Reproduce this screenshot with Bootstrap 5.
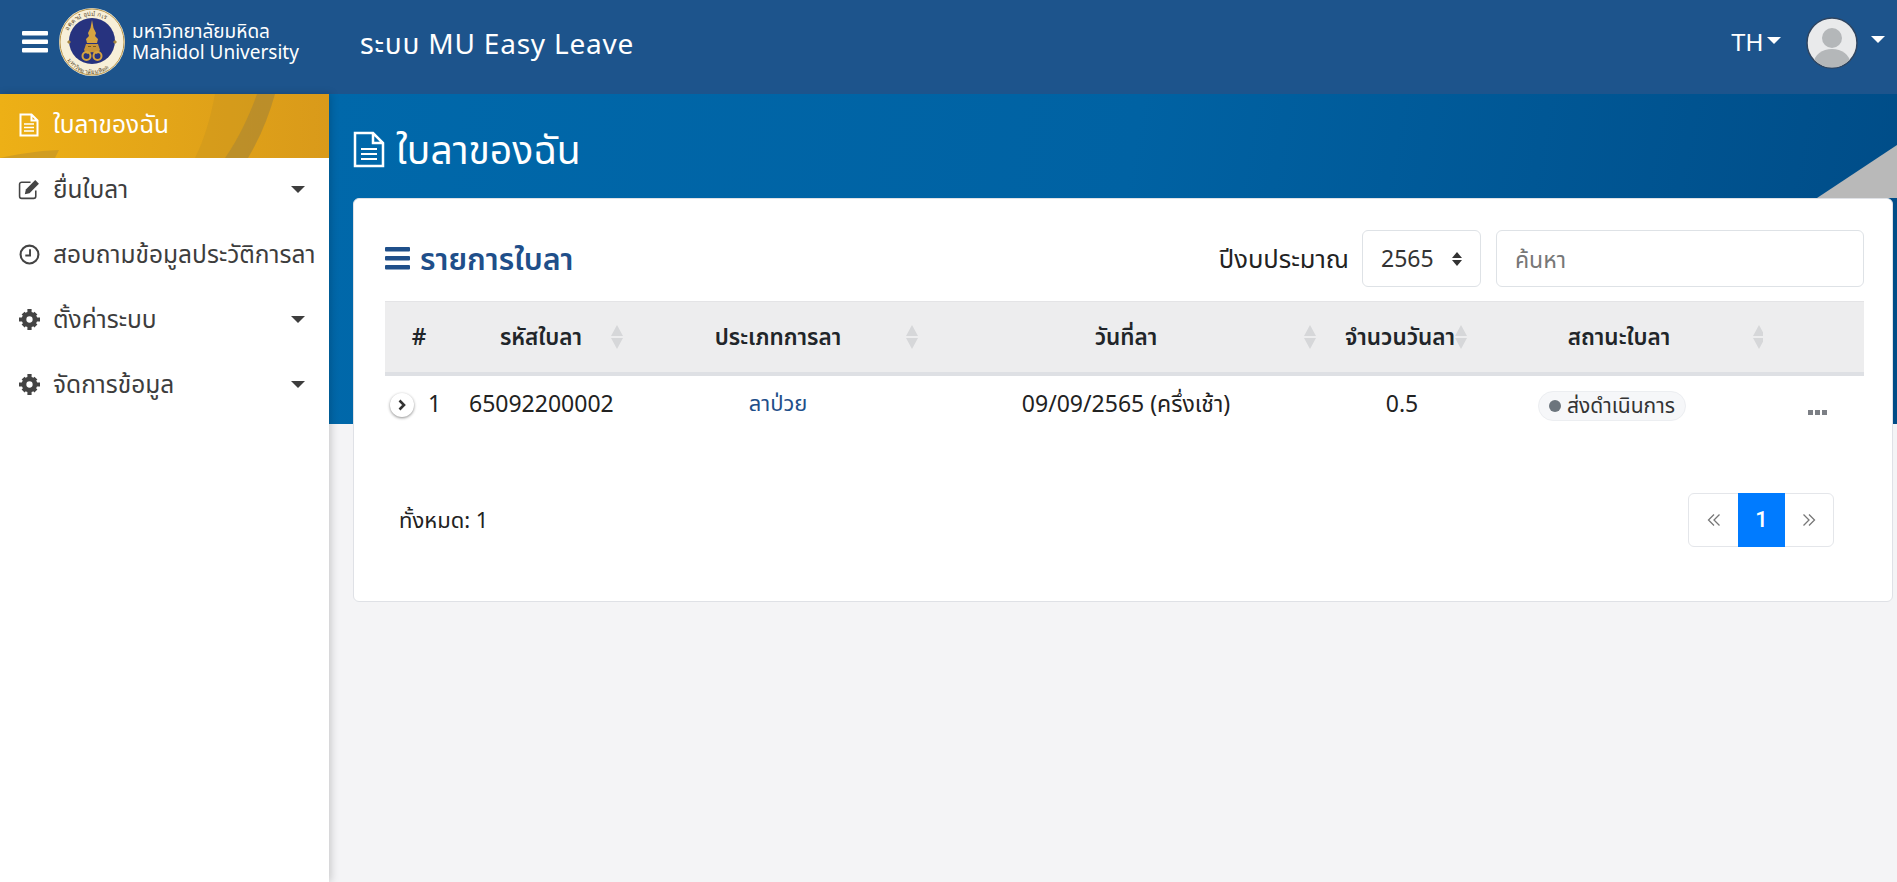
<!DOCTYPE html>
<html lang="th">
<head>
    <meta charset="UTF-8">
    <title>MU Easy Leave</title>
    <link href="https://cdn.jsdelivr.net/npm/bootstrap@5.3.0/dist/css/bootstrap.min.css" rel="stylesheet">
    <style>
        html, body { height: 100%; }
        body {
            font-family: "Noto Sans", "Noto Sans Thai", "Open Sans", sans-serif;
            background-color: #f4f4f6;
            color: #222;
            font-size: 22px;
            overflow: hidden;
        }
        .top-bar {
            height: 94px;
            background-color: #1d548c;
            color: #fff;
            padding: 0 0 10px 22px;
        }
        .logo-text { font-size: 19px; line-height: 21px; margin-left: 6px; width: 172px; white-space: nowrap; }
        .sys-title { font-size: 28px; margin-left: 56px; letter-spacing: .8px; white-space: nowrap; padding-top: 1px; }
        .caret-down {
            display: inline-block;
            border-top: 7px solid currentColor;
            border-left: 7px solid transparent;
            border-right: 7px solid transparent;
        }
        .user-area { margin-top: 2px; }
        .lang-btn { font-family: "Liberation Sans", sans-serif; font-size: 24px; margin-right: 25px; }
        .avatar { width: 52px; height: 52px; margin-right: 13px; }
        .user-caret { margin-right: 12px; margin-top: -8px; }
        .page-body { height: 788px; }
        .side-menu {
            width: 329px;
            flex-shrink: 0;
            background: #fff;
            box-shadow: 2px 0 8px rgba(0, 0, 0, .18);
            z-index: 2;
        }
        .side-item {
            height: 65px;
            border: 0;
            border-radius: 0 !important;
            color: #3d3d3d;
            font-size: 24.500px;
            white-space: nowrap;
            padding: 0 20px 3px 19px;
        }
        .side-item.is-active {
            position: relative;
            overflow: hidden;
            height: 64px;
            color: #fff;
            background: linear-gradient(90deg, #edb016, #d99a1a);
        }
        .side-item.is-active > span, .side-item.is-active > .side-ico { position: relative; }
        .streaks { position: absolute; left: 0; top: 0; }
        .side-ico { width: 21px; height: 21px; margin-right: 13px; flex-shrink: 0; }
        .side-ico.ico-file { width: 20px; height: 24px; margin-right: 14px; }
        .side-ico.ico-edit { width: 23px; margin-left: -1px; margin-right: 12px; }
        .main-area { min-width: 0; }
        .hero {
            position: relative;
            height: 330px;
            margin-bottom: -226px;
            background: linear-gradient(100deg, #0068aa 0%, #0062a3 50%, #004c87 100%);
            color: #fff;
            padding: 32px 0 0 24px;
            overflow: hidden;
        }
        .hero-title { font-size: 39px; font-weight: 400; margin: 0; }
        .hero-corner { position: absolute; right: 0; top: 51px; }
        .list-panel {
            position: relative;
            margin: 0 4px 0 24px;
            height: 404px;
            border-radius: 6px;
            border: 1px solid #dfe1e6;
            padding: 31px 28px 0 31px;
        }
        .panel-title { font-size: 30.500px; font-weight: 600; color: #1f4f8a; margin: 0; }
        .budget-label { font-size: 25.500px; margin-right: 13px; }
        .year-select {
            width: 119px;
            height: 57px;
            font-size: 23px;
            color: #333;
            margin-right: 15px;
            padding: 0 30px 0 18px;
            background-image: url("data:image/svg+xml,%3Csvg xmlns='http://www.w3.org/2000/svg' viewBox='0 0 12 16'%3E%3Cpath fill='%23333' d='M6 1l5 6H1zM6 15l5-6H1z'/%3E%3C/svg%3E");
            background-size: 12px 16px;
            background-position: right 17px center;
        }
        .search-box { width: 368px; height: 57px; font-size: 23px; padding-left: 18px; }
        .search-box::placeholder { color: #777; }
        .leave-table { table-layout: fixed; margin: 14px 0 0; width: 100%; }
        .leave-table th {
            background: #ededee;
            height: 72px;
            border-top: 1px solid #e4e4e6;
            border-bottom: 4px solid #dee0e4;
            font-size: 22.500px;
            font-weight: 600;
            vertical-align: middle;
            padding: 0;
            position: relative;
            white-space: nowrap;
        }
        .leave-table td {
            border: 0;
            font-size: 23px;
            padding: 10px 0 0;
            vertical-align: top;
            color: #222;
        }
        .sort-mark { position: absolute; top: 50%; transform: translateY(-50%); width: 12px; height: 24px; }
        .row-toggle {
            display: inline-flex;
            align-items: center;
            justify-content: center;
            width: 24px;
            height: 24px;
            border-radius: 50%;
            background: #fff;
            box-shadow: 0 1px 3px rgba(0, 0, 0, .45);
            margin: 7px 14px 0 5px;
            vertical-align: top;
        }
        .leave-table td.leave-type { color: #1f4f8a; font-size: 22px; }
        .status-pill {
            display: inline-flex;
            align-items: center;
            background: #f6f7f9;
            border: 1px solid #eceef1;
            border-radius: 15px;
            color: #333;
            font-size: 21px;
            font-weight: 400;
            height: 30px;
            padding: 0 10px;
            margin-top: 4px;
            white-space: nowrap;
        }
        .status-dot { width: 12px; height: 12px; border-radius: 50%; background: #6c757d; margin-right: 6px; }
        .more-dots { display: flex; gap: 2px; margin: 24px 0 0 45px; }
        .more-dots i { width: 5px; height: 5px; background: #7c7f85; display: block; }
        .panel-foot { margin: 72px 30px 0 14px; }
        .page-link { height: 54px; display: flex; align-items: center; justify-content: center; width: 50px; padding: 0; font-size: 24px; color: #777; border-color: #e4e6ea; }
        .page-item:first-child .page-link { width: 51px; }
        .page-item.active .page-link { background: #007bff; border-color: #007bff; width: 47px; color: #fff; font-family: Roboto, sans-serif; font-weight: 500; font-size: 22px; }
    </style>
</head>
<body>

<!-- Top bar -->
<nav class="navbar top-bar d-flex align-items-center flex-nowrap">
    <div class="d-flex align-items-center">
        <svg width="26" height="22" viewBox="0 0 26 22" fill="#fff" class="me-1"><rect y="0" width="26" height="4.5" rx="1"/><rect y="8.5" width="26" height="4.5" rx="1"/><rect y="17" width="26" height="4.5" rx="1"/></svg>
        <svg width="68" height="68" viewBox="0 0 68 68" style="margin-left:6px">
            <defs><path id="ringTop" d="M8 34a26 26 0 0 1 52 0"/><path id="ringBot" d="M6 38a28 28 0 0 0 56 0"/></defs>
            <ellipse cx="34" cy="34" rx="33" ry="34" fill="#f7efd8"/>
            <ellipse cx="34" cy="34" rx="32" ry="33" fill="none" stroke="#b8954c" stroke-width="1"/>
            <circle cx="34" cy="33" r="23" fill="#27337f"/>
            <text font-size="6" fill="#5b4a2a" font-family="Noto Sans, sans-serif"><textPath href="#ringTop" startOffset="14%">อตฺตานํ อุปมํ กเร</textPath></text>
            <text font-size="6" fill="#5b4a2a" font-family="Noto Sans, sans-serif"><textPath href="#ringBot" startOffset="16%">มหาวิทยาลัยมหิดล</textPath></text>
            <!-- crown and emblem -->
            <path d="M34 12l1.500 8 2.500 5-1 3 3 3-1 4H29l-1-4 3-3-1-3 2.500-5z" fill="#d6a440"/>
            <path d="M28 36h12l2 6-3 4-5-2-5 2-3-4z" fill="#c9963a"/>
            <path d="M30 38.500h3M35 38.500h3" stroke="#7d5a1c" stroke-width="1.200"/>
            <circle cx="28.500" cy="48" r="4" fill="none" stroke="#d6a440" stroke-width="2"/>
            <circle cx="39.500" cy="48" r="4" fill="none" stroke="#d6a440" stroke-width="2"/>
            <path d="M9 34l2-2 2 2-2 2zM55 34l2-2 2 2-2 2z" fill="#a8873f"/>
        </svg>
        <div class="logo-text">มหาวิทยาลัยมหิดล<br>Mahidol University</div>
        <div class="sys-title">ระบบ MU Easy Leave</div>
    </div>
    <div class="ms-auto d-flex align-items-center user-area">
        <div class="lang-btn d-flex align-items-center">TH<span class="caret-down ms-1" style="margin-top:-6px"></span></div>
        <svg class="avatar" viewBox="0 0 52 52">
            <defs><clipPath id="avClip"><circle cx="26" cy="26" r="24.5"/></clipPath></defs>
            <circle cx="26" cy="26" r="25" fill="#e9eaeb" stroke="#2f4560" stroke-width="1.5"/>
            <g clip-path="url(#avClip)" fill="#b4b7b9"><circle cx="26" cy="21" r="10"/><ellipse cx="26" cy="46" rx="18" ry="14"/></g>
        </svg>
        <span class="caret-down user-caret"></span>
    </div>
</nav>

<div class="d-flex page-body">
    <!-- Side menu -->
    <div class="side-menu list-group list-group-flush">
        <a class="list-group-item side-item is-active d-flex align-items-center" href="#">
            <svg class="streaks" width="329" height="64" viewBox="0 0 329 64"><path d="M215 0h42c-8 22-18 44-32 64h-30c10-20 16-42 20-64z" fill="#b98a24" opacity=".25"/><path d="M257 0h18c-6 22-15 44-27 64h-23c14-20 24-42 32-64z" fill="#a98533" opacity=".65"/><path d="M0 64c18-4 36-7 59-8l-4 8z" fill="#a98533" opacity=".4"/></svg>
            <svg class="side-ico ico-file" viewBox="0 0 20 24" fill="none" stroke="#fff" stroke-width="2"><path d="M1.500 1.500h11l6 6v15h-17zM12.500 1.500v6h6"/><path d="M5 11h10M5 14.500h10M5 18h10" stroke-width="1.700"/></svg>
            <span>ใบลาของฉัน</span>
        </a>
        <a class="list-group-item side-item d-flex align-items-center" href="#">
            <svg class="side-ico ico-edit" viewBox="0 0 22 20" fill="none" stroke="#444" stroke-width="1.500"><path d="M17 11v5.500a2 2 0 0 1-2 2H3.500a2 2 0 0 1-2-2V5a2 2 0 0 1 2-2H12"/><path d="M7.500 10l9-9 3.500 3.500-9 9-4.500 1z" fill="#444" stroke="none"/></svg>
            <span>ยื่นใบลา</span><span class="caret-down ms-auto me-1"></span>
        </a>
        <a class="list-group-item side-item d-flex align-items-center" href="#">
            <svg class="side-ico" viewBox="0 0 20 20" fill="none" stroke="#444" stroke-width="2"><circle cx="10" cy="10" r="8.500"/><path d="M10.500 5v6H6" stroke-width="1.800"/></svg>
            <span>สอบถามข้อมูลประวัติการลา</span>
        </a>
        <a class="list-group-item side-item d-flex align-items-center" href="#">
            <svg class="side-ico" viewBox="0 0 20 20"><circle cx="10" cy="10" r="5.200" fill="none" stroke="#444" stroke-width="4.400"/><path d="M8 0h4v4H8zM8 16h4v4H8zM0 8h4v4H0zM16 8h4v4h-4zM2.500 5.300l2.800-2.800 2.500 2.500-2.800 2.800zM12.200 15l2.800-2.800 2.500 2.500-2.800 2.800zM2.500 14.700l2.500-2.500 2.800 2.800-2.500 2.500zM12.200 5l2.500-2.500 2.800 2.800-2.500 2.500z" fill="#444"/></svg>
            <span>ตั้งค่าระบบ</span><span class="caret-down ms-auto me-1"></span>
        </a>
        <a class="list-group-item side-item d-flex align-items-center" href="#">
            <svg class="side-ico" viewBox="0 0 20 20"><circle cx="10" cy="10" r="5.200" fill="none" stroke="#444" stroke-width="4.400"/><path d="M8 0h4v4H8zM8 16h4v4H8zM0 8h4v4H0zM16 8h4v4h-4zM2.500 5.300l2.800-2.800 2.500 2.500-2.800 2.800zM12.200 15l2.800-2.800 2.500 2.500-2.800 2.800zM2.500 14.700l2.500-2.500 2.800 2.800-2.500 2.500zM12.200 5l2.500-2.500 2.800 2.800-2.500 2.500z" fill="#444"/></svg>
            <span>จัดการข้อมูล</span><span class="caret-down ms-auto me-1"></span>
        </a>
    </div>

    <!-- Main -->
    <div class="main-area flex-grow-1">
        <div class="hero">
            <svg class="hero-corner" width="80" height="53" viewBox="0 0 80 53"><path d="M80 0v53H0z" fill="#b9b9b9"/></svg>
            <h1 class="hero-title d-flex align-items-center">
                <svg width="32" height="37" viewBox="0 0 32 37" fill="none" stroke="#fff" stroke-width="2.500" style="margin-right:11px"><path d="M2 2h18l10 10v23H2zM20 2v10h10"/><path d="M8 18h16M8 23h16M8 28h16" stroke-width="2.200"/></svg>
                ใบลาของฉัน
            </h1>
        </div>

        <div class="card list-panel">
            <div class="d-flex align-items-center">
                <h2 class="panel-title d-flex align-items-center">
                    <svg width="25" height="23" viewBox="0 0 25 23" fill="#1f4f8a" style="margin-right:10px"><rect width="25" height="4.500" rx="1"/><rect y="9" width="25" height="4.500" rx="1"/><rect y="18" width="25" height="4.500" rx="1"/></svg>
                    รายการใบลา
                </h2>
                <div class="ms-auto d-flex align-items-center">
                    <span class="budget-label">ปีงบประมาณ</span>
                    <select class="form-select year-select"><option>2565</option></select>
                    <input class="form-control search-box" type="text" placeholder="ค้นหา">
                </div>
            </div>

            <table class="table leave-table text-center">
                <colgroup><col style="width:68px"><col style="width:176px"><col style="width:298px"><col style="width:398px"><col style="width:150px"><col style="width:288px"><col></colgroup>
                <thead>
                    <tr>
                        <th>#</th>
                        <th>รหัสใบลา<svg class="sort-mark" style="right:6px" viewBox="0 0 12 24" fill="#d6d7d9"><path d="M6 0l6 11H0zM6 24l6-11H0z"/></svg></th>
                        <th>ประเภทการลา<svg class="sort-mark" style="right:9px" viewBox="0 0 12 24" fill="#d6d7d9"><path d="M6 0l6 11H0zM6 24l6-11H0z"/></svg></th>
                        <th>วันที่ลา<svg class="sort-mark" style="right:9px" viewBox="0 0 12 24" fill="#d6d7d9"><path d="M6 0l6 11H0zM6 24l6-11H0z"/></svg></th>
                        <th>จำนวนวันลา<svg class="sort-mark" style="right:8px" viewBox="0 0 12 24" fill="#d6d7d9"><path d="M6 0l6 11H0zM6 24l6-11H0z"/></svg></th>
                        <th>สถานะใบลา<svg class="sort-mark" style="right:-2px" viewBox="0 0 12 24" fill="#d6d7d9"><path d="M6 0l6 11H0zM6 24l6-11H0z"/></svg></th>
                        <th></th>
                    </tr>
                </thead>
                <tbody>
                    <tr>
                        <td class="text-start"><span class="row-toggle"><svg width="10" height="12" viewBox="0 0 10 12" fill="none" stroke="#333" stroke-width="2.600"><path d="M2.500 1.500L7 6l-4.500 4.500"/></svg></span>1</td>
                        <td class="text-start" style="padding-left:16px">65092200002</td>
                        <td class="leave-type">ลาป่วย</td>
                        <td>09/09/2565 (ครึ่งเช้า)</td>
                        <td style="padding-left:4px">0.5</td>
                        <td class="text-start" style="padding-left:63px"><span class="status-pill"><span class="status-dot"></span>ส่งดำเนินการ</span></td>
                        <td><div class="more-dots"><i></i><i></i><i></i></div></td>
                    </tr>
                </tbody>
            </table>

            <div class="d-flex align-items-center justify-content-between panel-foot">
                <span>ทั้งหมด: 1</span>
                <ul class="pagination m-0">
                    <li class="page-item"><a class="page-link" href="#" aria-label="Previous"><svg width="14" height="14" viewBox="0 0 14 14" fill="none" stroke="#777" stroke-width="1.300"><path d="M7 1.500L1.500 7 7 12.500M12.500 1.500L7 7l5.500 5.500"/></svg></a></li>
                    <li class="page-item active"><a class="page-link" href="#">1</a></li>
                    <li class="page-item"><a class="page-link" href="#" aria-label="Next"><svg width="14" height="14" viewBox="0 0 14 14" fill="none" stroke="#777" stroke-width="1.300"><path d="M1.500 1.500L7 7l-5.500 5.500M7 1.500L12.500 7 7 12.500"/></svg></a></li>
                </ul>
            </div>
        </div>
    </div>
</div>

<script src="https://cdn.jsdelivr.net/npm/bootstrap@5.3.0/dist/js/bootstrap.bundle.min.js"></script>
</body>
</html>
